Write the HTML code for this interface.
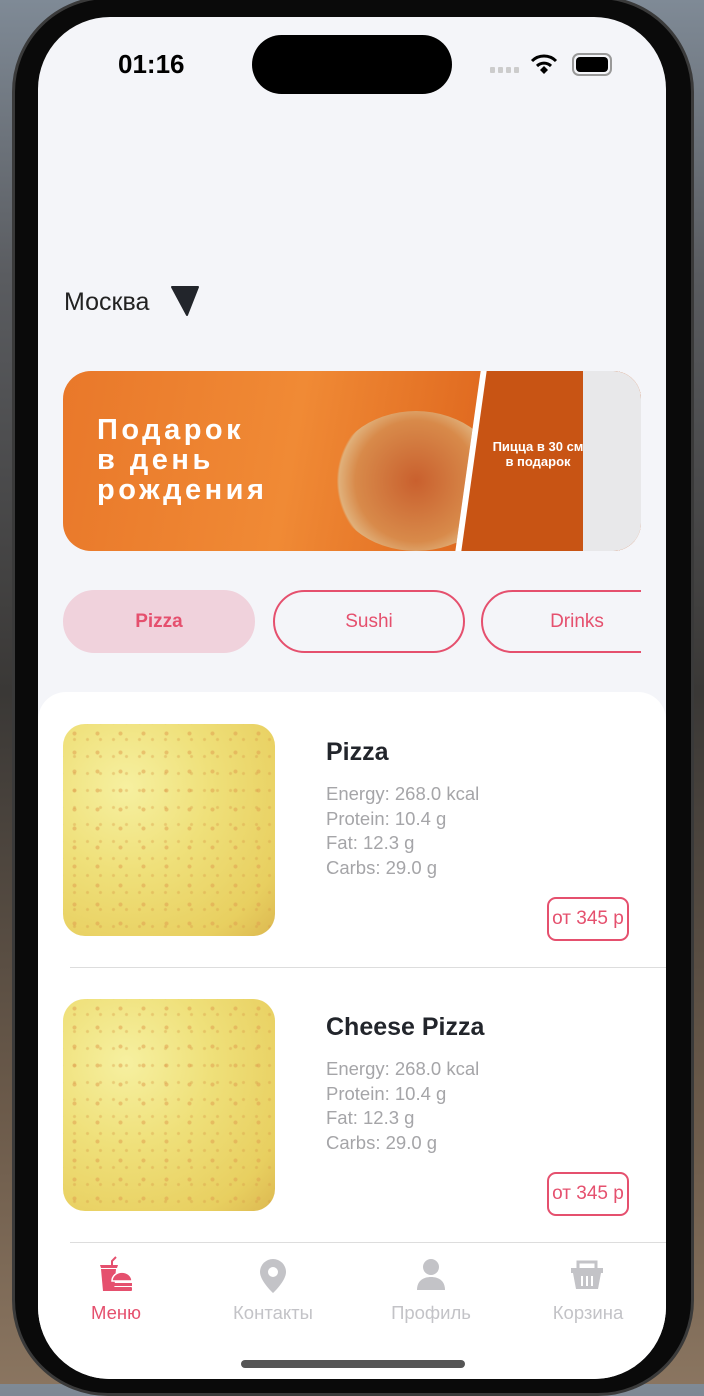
<!DOCTYPE html>
<html><head><meta charset="utf-8">
<style>
*{margin:0;padding:0;box-sizing:border-box}
body{width:704px;height:1384px;position:relative;overflow:hidden;font-family:"Liberation Sans",sans-serif;background:linear-gradient(180deg,#7f8a96 0,#5a5c60 20%,#3a3836 50%,#6b5a4a 80%,#8a7560 100%)}
.bezel{position:absolute;left:12px;top:-4px;width:682px;height:1400px;background:#0a0a0a;border-radius:96px;border:3px solid #3a3a3a}
.screen{position:absolute;left:38px;top:17px;width:628px;height:1362px;background:#f4f5f9;border-radius:72px;overflow:hidden}
.abs{position:absolute}
.island{left:214px;top:18px;width:200px;height:59px;background:#000;border-radius:30px}
.time{left:80px;top:32px;font-size:26px;font-weight:bold;color:#000}
.city{left:26px;top:271px;font-size:25px;color:#222}
.banner{left:25px;top:354px;width:578px;height:180px;border-radius:28px;overflow:hidden;background:linear-gradient(100deg,#e9782a 0%,#f08a35 40%,#e06a20 70%,#d35a18 100%)}
.chip{top:573px;height:63px;width:192px;border-radius:32px;border:2px solid #e5506e;color:#e5506e;font-size:19px;text-align:center;line-height:59px}
.card{left:0;top:675px;width:628px;height:700px;background:#fff;border-radius:28px 28px 0 0}
.img{width:212px;height:212px;border-radius:22px;background-color:#efe07a;background-image:radial-gradient(circle,rgba(224,160,80,.55) 0,rgba(224,160,80,.55) 1.5px,transparent 2.5px),radial-gradient(circle,rgba(216,154,72,.4) 0,rgba(216,154,72,.4) 1px,transparent 2px),radial-gradient(circle at 30% 30%,#f6f0a0 0,#efe07a 40%,#e8cf60 80%,#dcb850 100%);background-size:23px 19px,13px 17px,100% 100%;background-position:0 0,5px 7px,0 0}
.title{font-size:25px;font-weight:bold;color:#22252b}
.stats{font-size:18.5px;color:#a5a5a8;line-height:24.5px}
.price{width:82px;height:44px;border:2px solid #e5506e;border-radius:9px;color:#e5506e;font-size:19px;text-align:center;line-height:40px;white-space:nowrap;overflow:hidden}
.div{height:1px;background:#ddd}
.tab{top:1285px;font-size:18.5px;color:#c3c3c7;text-align:center;width:130px}
</style></head><body>
<div class="bezel"></div>
<div class="screen">
 <div class="abs island"></div>
 <div class="abs time">01:16</div>
 <div class="abs" style="left:452px;top:50px;display:flex;gap:3px"><i style="width:5px;height:6px;background:#ccc;border-radius:1px"></i><i style="width:5px;height:6px;background:#ccc;border-radius:1px"></i><i style="width:5px;height:6px;background:#ccc;border-radius:1px"></i><i style="width:5px;height:6px;background:#ccc;border-radius:1px"></i></div>
 <svg class="abs" style="left:492px;top:36px" width="28" height="22" viewBox="0 0 28 22"><path d="M2 8a17 17 0 0 1 24 0" stroke="#000" stroke-width="3" fill="none"/><path d="M7 13a10 10 0 0 1 14 0" stroke="#000" stroke-width="3" fill="none"/><path d="M10 17l4-4 4 4-4 4z" fill="#000"/></svg>
 <div class="abs" style="left:534px;top:36px;width:40px;height:23px;border:2px solid #999;border-radius:7px;padding:2px"><div style="width:100%;height:100%;background:#000;border-radius:4px"></div></div>
 <div class="abs city">Москва</div>
 <svg class="abs" style="left:132px;top:268px" width="32" height="32"><path d="M2 2h26l-11 28z" fill="#22252b" stroke="#22252b" stroke-width="2" stroke-linejoin="round"/></svg>
 <div class="abs banner">
  <div class="abs" style="left:34px;top:44px;color:#fff;font-weight:bold;font-size:29px;line-height:30px;letter-spacing:3.5px">Подарок<br>в день<br>рождения</div>
  <div class="abs" style="left:268px;top:40px;width:170px;height:140px;border-radius:50%;background:radial-gradient(circle,#c9602e 0,#d88a4a 55%,#e0b07a 70%,transparent 72%)"></div>
  <div class="abs" style="left:405px;top:0;width:178px;height:180px;background:#c85414;transform:skewX(-8deg);border-left:6px solid #fff"></div>
  <div class="abs" style="left:425px;top:68px;color:#fff;font-weight:bold;font-size:13px;text-align:center;width:100px">Пицца в 30 см<br>в подарок</div>
  <div class="abs" style="left:520px;top:0;width:60px;height:180px;background:#e8e8ea"></div>
 </div>
 <div class="abs chip" style="left:25px;background:#f0d2dc;border-color:#f0d2dc;font-weight:bold">Pizza</div>
 <div class="abs chip" style="left:235px">Sushi</div>
 <div class="abs" style="left:443px;top:573px;width:160px;height:63px;overflow:hidden"><div class="chip" style="position:absolute;left:0;top:0">Drinks</div></div>
 <div class="abs card">
  <div class="abs img" style="left:25px;top:32px"></div>
  <div class="abs title" style="left:288px;top:46px">Pizza</div>
  <div class="abs stats" style="left:288px;top:90px">Energy: 268.0 kcal<br>Protein: 10.4 g<br>Fat: 12.3 g<br>Carbs: 29.0 g</div>
  <div class="abs price" style="left:509px;top:205px">от 345 р</div>
  <div class="abs div" style="left:32px;top:275px;width:596px"></div>
  <div class="abs img" style="left:25px;top:307px"></div>
  <div class="abs title" style="left:288px;top:321px">Cheese Pizza</div>
  <div class="abs stats" style="left:288px;top:365px">Energy: 268.0 kcal<br>Protein: 10.4 g<br>Fat: 12.3 g<br>Carbs: 29.0 g</div>
  <div class="abs price" style="left:509px;top:480px">от 345 р</div>
  <div class="abs div" style="left:32px;top:550px;width:596px"></div>
 </div>
 <svg class="abs" style="left:60px;top:1239px" width="36" height="36" viewBox="0 0 36 36"><path d="M18 1l-4 4v5" stroke="#e5506e" stroke-width="2" fill="none"/><path d="M2 9h18l-1 3H3z" fill="#e5506e"/><path d="M3 13h15l-2 22H5z" fill="#e5506e"/><path d="M14 25a9 8 0 0 1 20 0z" fill="#e5506e" stroke="#fff" stroke-width="1.5"/><rect x="14" y="27" width="20" height="3" fill="#e5506e"/><rect x="14" y="31" width="20" height="4" rx="1" fill="#e5506e"/></svg>
 <svg class="abs" style="left:221px;top:1241px" width="28" height="36" viewBox="0 0 28 36"><path d="M14 1a13 13 0 0 0-13 13c0 9 13 21 13 21s13-12 13-21A13 13 0 0 0 14 1z" fill="#c3c3c7"/><circle cx="14" cy="14" r="5" fill="#fff"/></svg>
 <svg class="abs" style="left:378px;top:1241px" width="30" height="32" viewBox="0 0 30 32"><circle cx="15" cy="9" r="8" fill="#c3c3c7"/><path d="M1 32c0-9 6-13 14-13s14 4 14 13z" fill="#c3c3c7"/></svg>
 <svg class="abs" style="left:532px;top:1241px" width="34" height="32" viewBox="0 0 34 32"><path d="M8 11V4h18v7" stroke="#c3c3c7" stroke-width="3" fill="none"/><path d="M1 10h32v5H1z" fill="#c3c3c7"/><path d="M3 15h28l-3 16H6z" fill="#c3c3c7"/><path d="M12 18v10M17 18v10M22 18v10" stroke="#fff" stroke-width="2"/></svg>
 <div class="abs tab" style="left:13px;color:#e5506e">Меню</div>
 <div class="abs tab" style="left:170px">Контакты</div>
 <div class="abs tab" style="left:328px">Профиль</div>
 <div class="abs tab" style="left:485px">Корзина</div>
 <div class="abs" style="left:203px;top:1343px;width:224px;height:8px;border-radius:4px;background:#555"></div>
</div>
</body></html>
